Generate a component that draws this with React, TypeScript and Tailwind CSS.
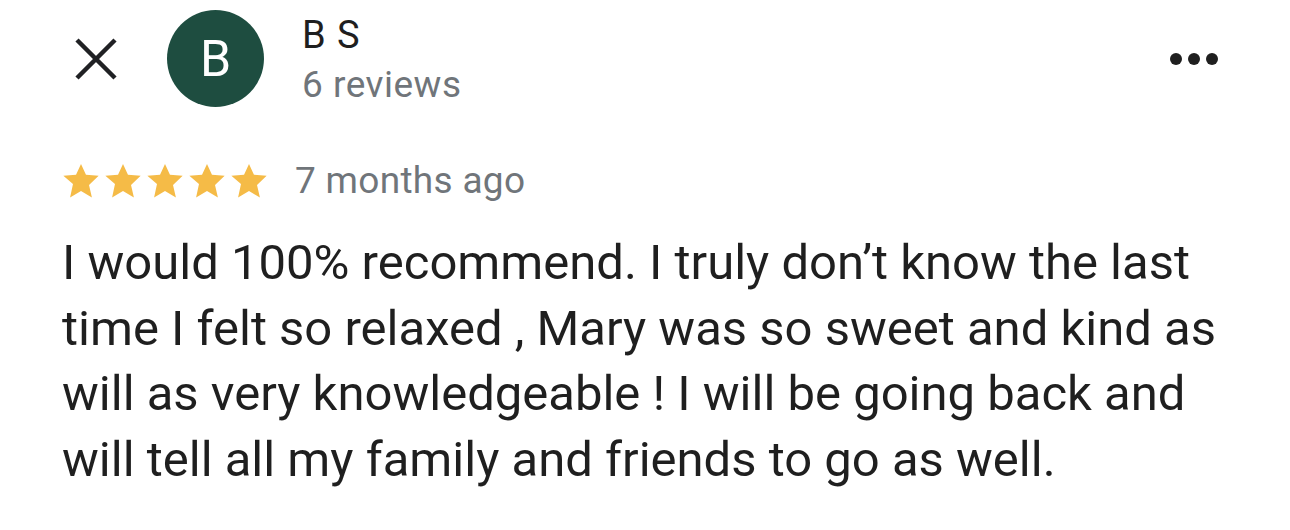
import React from 'react';

const Star: React.FC = () => (
  <svg viewBox="2 2 20 19.27" className="h-[34px] w-[36px]" fill="#f5bb47">
    <path d="M12 17.27L18.18 21l-1.64-7.03L22 8.64l-7.19-.61L12 2 9.19 8.03 2 8.64l5.46 4.73L5.82 21z" />
  </svg>
);

const lines = [
  'I would 100% recommend. I truly don’t know the last',
  'time I felt so relaxed , Mary was so sweet and kind as',
  'will as very knowledgeable ! I will be going back and',
  'will tell all my family and friends to go as well.',
];

const App: React.FC = () => {
  return (
    <div className="w-[1290px] h-[530px] bg-white overflow-hidden" style={{ fontFamily: 'Roboto, "Noto Sans", sans-serif' }}>
      {/* Header */}
      <div className="flex items-center pt-[10px] pl-[75px] pr-[72px]">
        <svg width="42" height="42" viewBox="0 0 42 42" className="shrink-0">
          <path d="M2 2L40 40M40 2L2 40" stroke="#202124" strokeWidth="4.5" />
        </svg>
        <div className="ml-[50px] flex h-[97px] w-[97px] shrink-0 items-center justify-center rounded-full bg-[#1e4d40]">
          <span className="text-[50px] leading-none text-white">B</span>
        </div>
        <div className="ml-[38px] flex flex-col self-start pt-[3px]">
          <span className="text-[38px] leading-[44px] tracking-[1px] text-[#1f1f1f]">B S</span>
          <span className="mt-[6px] text-[37px] leading-[44px] tracking-[0.5px] text-[#70757a]">6 reviews</span>
        </div>
        <div className="ml-auto flex items-center gap-[6px]">
          <span className="h-[12px] w-[12px] rounded-full bg-[#1f1f1f]" />
          <span className="h-[12px] w-[12px] rounded-full bg-[#1f1f1f]" />
          <span className="h-[12px] w-[12px] rounded-full bg-[#1f1f1f]" />
        </div>
      </div>

      {/* Rating */}
      <div className="mt-[55px] flex items-center pl-[63px]">
        <div className="flex gap-[6px]">
          <Star />
          <Star />
          <Star />
          <Star />
          <Star />
        </div>
        <span className="ml-[28px] text-[37px] leading-none tracking-[0.3px] text-[#70757a]">7 months ago</span>
      </div>

      {/* Review */}
      <div className="mt-[31px] pl-[62px] text-[49px] leading-[65.5px] text-[#1f1f1f]">
        {lines.map((l) => (
          <div key={l} className="whitespace-nowrap">
            {l}
          </div>
        ))}
      </div>
    </div>
  );
};

export default App;
